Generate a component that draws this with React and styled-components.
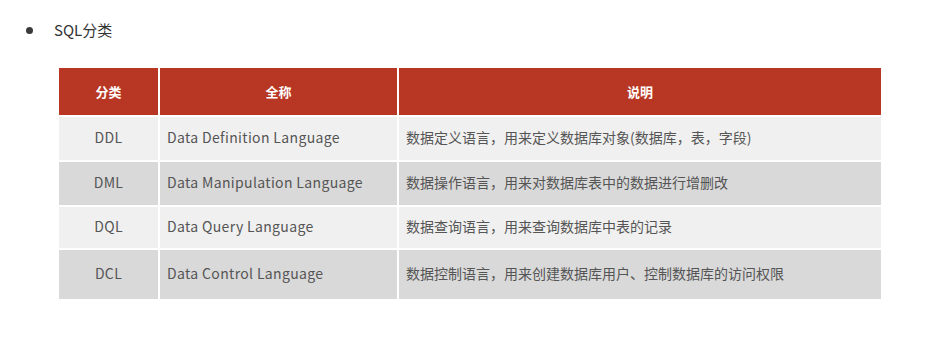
import React from "react";
import styled, { createGlobalStyle } from "styled-components";

const GlobalStyle = createGlobalStyle`
  html, body {
    margin: 0;
    padding: 0;
    background: #ffffff;
    font-family: "Noto Sans CJK SC", "Noto Sans", sans-serif;
  }
`;

const Page = styled.div`
  width: 925px;
  height: 348px;
  background: #ffffff;
  padding: 18px 0 0 0;
  box-sizing: border-box;
`;

const Heading = styled.div`
  display: flex;
  align-items: center;
  height: 22px;
  padding-left: 26px;
  font-size: 15px;
  color: #333333;
`;

const Bullet = styled.span`
  width: 7px;
  height: 7px;
  border-radius: 50%;
  background: #3a3a3a;
  margin-right: 21px;
  margin-top: 2px;
`;

const TableGrid = styled.div`
  display: grid;
  grid-template-columns: 99px 237px 482px;
  column-gap: 2px;
  row-gap: 2px;
  width: 822px;
  margin: 28px 0 0 59px;
`;

const Cell = styled.div`
  display: flex;
  align-items: center;
  justify-content: ${(p) => (p.$center ? "center" : "flex-start")};
  box-sizing: border-box;
  height: ${(p) => p.$h}px;
  padding-left: ${(p) => (p.$center ? 0 : 7)}px;
  padding-bottom: ${(p) => (p.$head ? 0 : 4)}px;
  background: ${(p) => p.$bg};
  color: ${(p) => (p.$head ? "#ffffff" : "#555555")};
  font-size: ${(p) => (p.$head ? 13 : 14)}px;
  font-weight: ${(p) => (p.$head ? 700 : 400)};
  letter-spacing: ${(p) => (p.$latin ? "0.35px" : "0")};
  white-space: nowrap;
`;

const HeaderCell = styled(Cell)`
  background: #b83724;
`;

const rows = [
  ["DDL", "Data Definition Language", "数据定义语言，用来定义数据库对象(数据库，表，字段)", 43],
  ["DML", "Data Manipulation Language", "数据操作语言，用来对数据库表中的数据进行增删改", 43],
  ["DQL", "Data Query Language", "数据查询语言，用来查询数据库中表的记录", 41],
  ["DCL", "Data Control Language", "数据控制语言，用来创建数据库用户、控制数据库的访问权限", 49],
];

export default function App() {
  return (
    <>
      <GlobalStyle />
      <Page>
        <Heading>
          <Bullet />
          SQL分类
        </Heading>
        <TableGrid>
          <HeaderCell $head $center $h={47}>分类</HeaderCell>
          <HeaderCell $head $center $h={47}>全称</HeaderCell>
          <HeaderCell $head $center $h={47}>说明</HeaderCell>
          {rows.map(([code, name, desc, h], i) => {
            const bg = i % 2 === 0 ? "#f0f0f0" : "#d9d9d9";
            return (
              <React.Fragment key={code}>
                <Cell $center $latin $h={h} $bg={bg}>{code}</Cell>
                <Cell $latin $h={h} $bg={bg}>{name}</Cell>
                <Cell $h={h} $bg={bg}>{desc}</Cell>
              </React.Fragment>
            );
          })}
        </TableGrid>
      </Page>
    </>
  );
}
